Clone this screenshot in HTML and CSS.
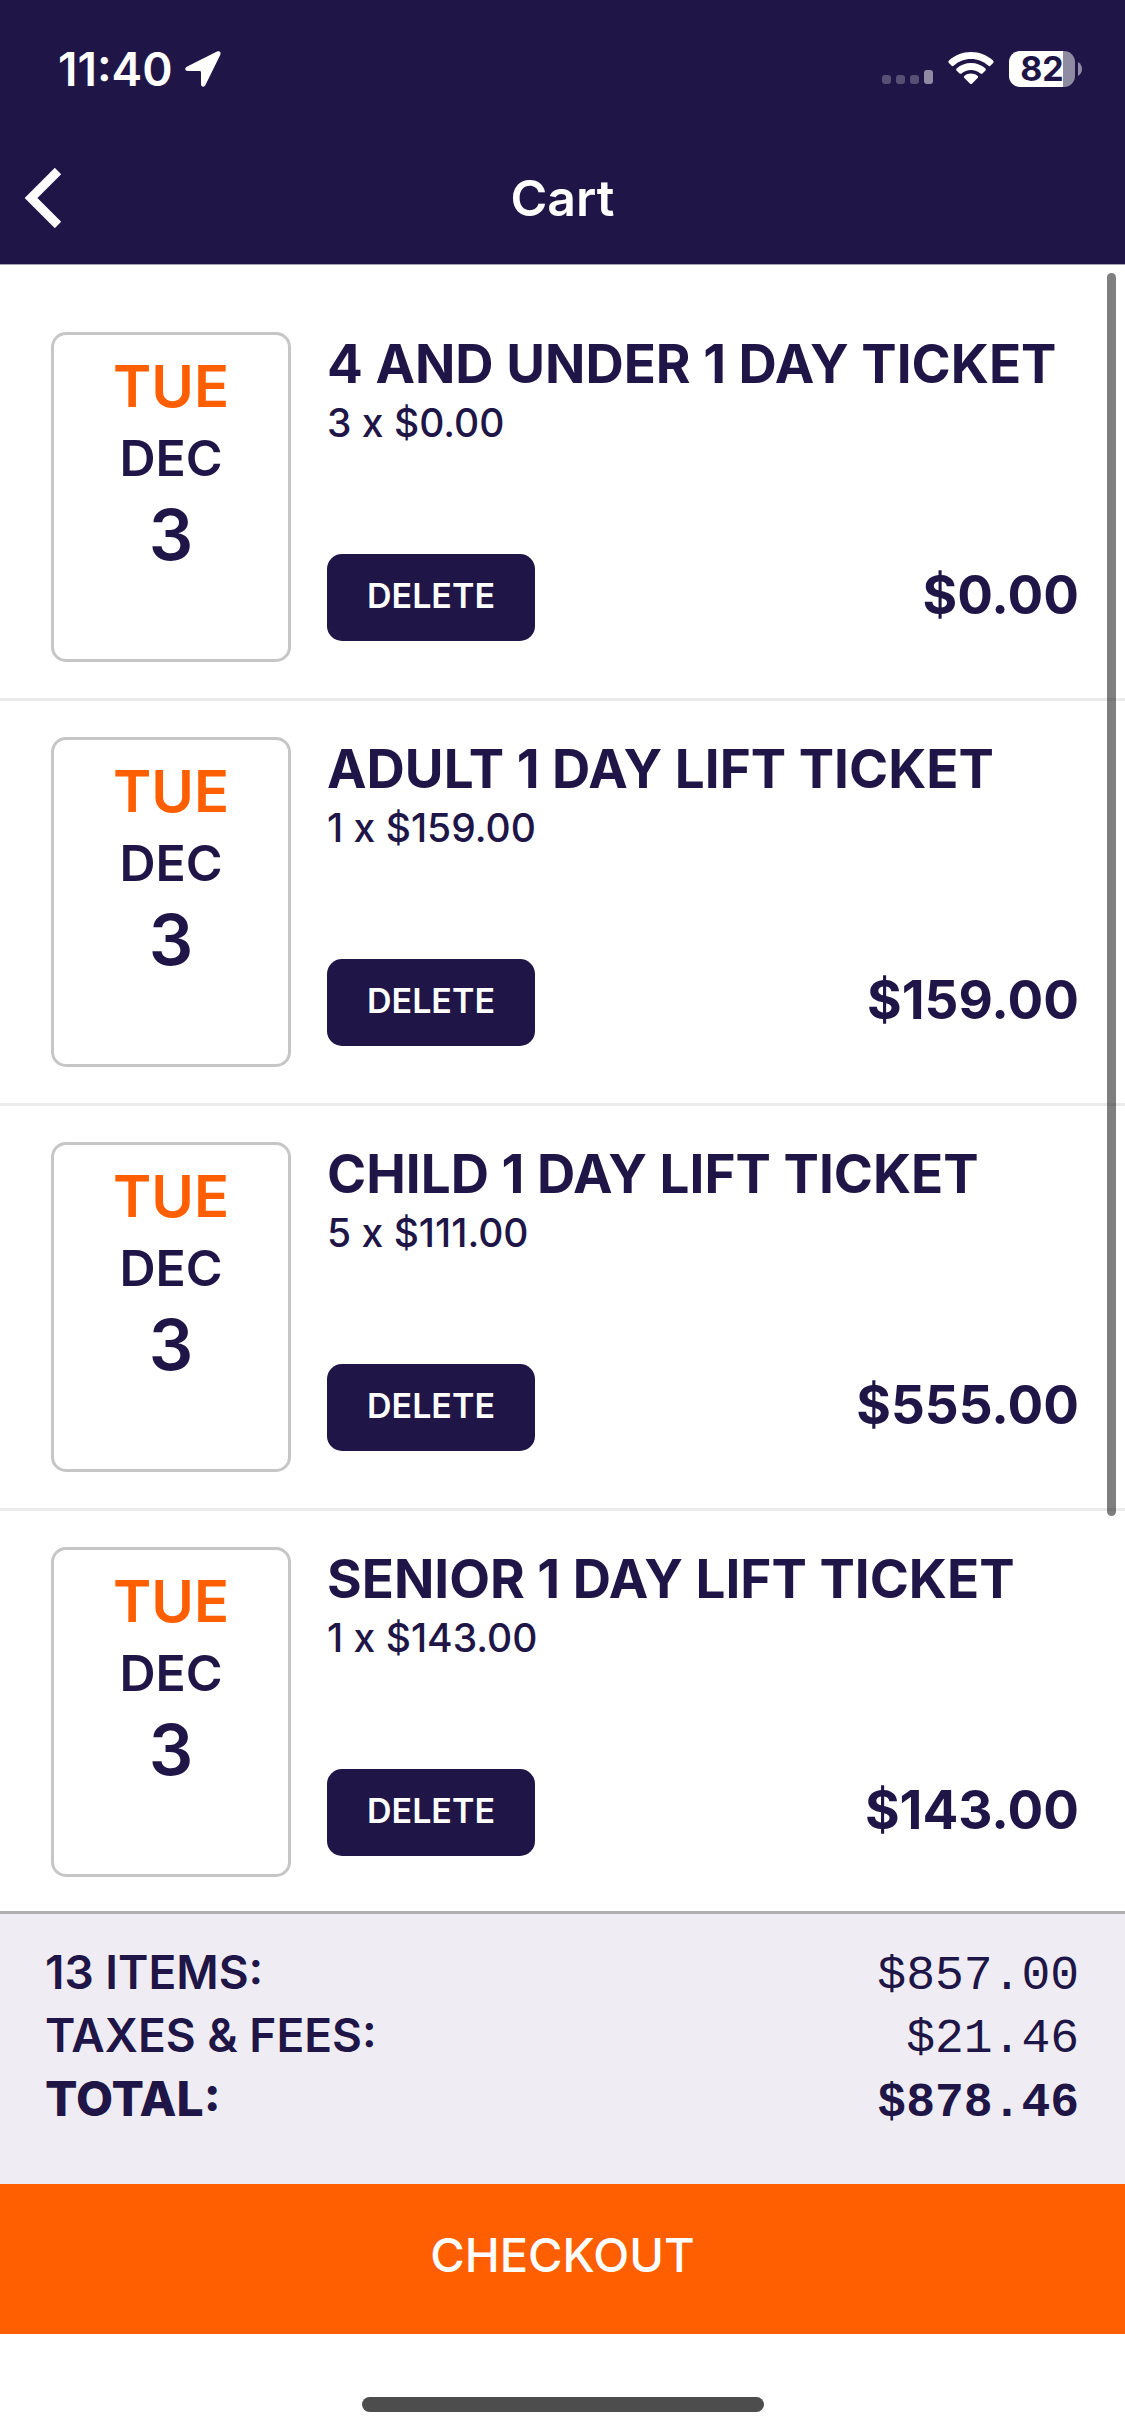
FILE: index.html
```
<!DOCTYPE html>
<html lang="en">
<head>
    <meta charset="UTF-8">
    <meta name="viewport" content="width=device-width, initial-scale=1.0">
    <title>Cart</title>
    <link rel="stylesheet" href="styles.css">
</head>
<body>
    <div class="app">
        <header class="header">
            <div class="status-bar">
                <div class="status-left">
                    <span class="time">11:40</span>
                    <svg class="location" width="36" height="36" viewBox="0 0 36 36" fill="#fff">
                        <path d="M32 .6 2.2 15.4C-.8 17-.2 20 3 20h11.500c1 0 1.500.5 1.500 1.500V33c0 3.200 3.200 3.800 4.600.8L35.200 4C36.400 1.400 34.600-.6 32 .6z"/>
                    </svg>
                </div>
                <div class="status-right">
                    <svg width="51" height="34" viewBox="0 0 51 34" fill="#fff">
                        <rect x="0" y="23" width="9" height="9" rx="3" opacity=".25"/>
                        <rect x="14" y="23" width="9" height="9" rx="3" opacity=".25"/>
                        <rect x="28" y="23" width="9" height="9" rx="3" opacity=".25"/>
                        <rect x="42" y="18" width="9" height="14" rx="3" opacity=".5"/>
                    </svg>
                    <svg width="46" height="34" viewBox="0 0 46 34" fill="#fff">
                        <path d="M23 0C14.500 0 6.800 3.200 1 8.500c-.8.800-.9 1.800-.1 2.600l2.500 2.500c.7.700 1.600.7 2.400 0C10.400 9.500 16.400 7 23 7s12.600 2.500 17.200 6.600c.8.700 1.700.7 2.400 0l2.500-2.500c.8-.8.700-1.800-.1-2.600C39.200 3.200 31.500 0 23 0z"/>
                        <path d="M23 11c-5.400 0-10.400 2-14.200 5.300-.8.700-.8 1.700-.1 2.400l2.600 2.600c.7.700 1.500.7 2.300.1C16.200 19.300 19.400 18 23 18s6.800 1.300 9.400 3.400c.8.600 1.600.6 2.300-.1l2.600-2.600c.7-.7.7-1.700-.1-2.400C33.400 13 28.400 11 23 11z"/>
                        <path d="M23 21.500c-2.400 0-4.700.8-6.500 2.200-.8.600-.8 1.500-.1 2.200l5.400 5.600c.8.800 1.600.8 2.400 0l5.400-5.600c.7-.7.7-1.600-.1-2.200-1.800-1.400-4.100-2.200-6.500-2.200z"/>
                    </svg>
                    <div class="battery">
                        <span class="battery-level">82</span>
                        <svg width="4" height="14" viewBox="0 0 4 14" fill="#8f8ba3">
                            <path d="M0 0c2.500 1.500 4 4 4 7s-1.500 5.500-4 7z"/>
                        </svg>
                    </div>
                </div>
            </div>
            <nav class="nav-bar">
                <button class="back" aria-label="Back">
                    <svg width="38" height="60" viewBox="0 0 38 60" fill="none" stroke="#fff" stroke-width="9">
                        <path d="M34 3 7 30l27 27"/>
                    </svg>
                </button>
                <h1>Cart</h1>
            </nav>
        </header>

        <main class="cart">
            <ul class="items">
                <li class="item">
                    <div class="date">
                        <span class="weekday">TUE</span>
                        <span class="month">DEC</span>
                        <span class="day">3</span>
                    </div>
                    <div class="details">
                        <h2>4 AND UNDER 1 DAY TICKET</h2>
                        <p class="quantity">3 x $0.00</p>
                        <div class="actions">
                            <button class="delete">DELETE</button>
                            <span class="price">$0.00</span>
                        </div>
                    </div>
                </li>
                <li class="item">
                    <div class="date">
                        <span class="weekday">TUE</span>
                        <span class="month">DEC</span>
                        <span class="day">3</span>
                    </div>
                    <div class="details">
                        <h2>ADULT 1 DAY LIFT TICKET</h2>
                        <p class="quantity">1 x $159.00</p>
                        <div class="actions">
                            <button class="delete">DELETE</button>
                            <span class="price">$159.00</span>
                        </div>
                    </div>
                </li>
                <li class="item">
                    <div class="date">
                        <span class="weekday">TUE</span>
                        <span class="month">DEC</span>
                        <span class="day">3</span>
                    </div>
                    <div class="details">
                        <h2>CHILD 1 DAY LIFT TICKET</h2>
                        <p class="quantity">5 x $111.00</p>
                        <div class="actions">
                            <button class="delete">DELETE</button>
                            <span class="price">$555.00</span>
                        </div>
                    </div>
                </li>
                <li class="item">
                    <div class="date">
                        <span class="weekday">TUE</span>
                        <span class="month">DEC</span>
                        <span class="day">3</span>
                    </div>
                    <div class="details">
                        <h2>SENIOR 1 DAY LIFT TICKET</h2>
                        <p class="quantity">1 x $143.00</p>
                        <div class="actions">
                            <button class="delete">DELETE</button>
                            <span class="price">$143.00</span>
                        </div>
                    </div>
                </li>
            </ul>
            <div class="scroll-thumb"></div>
        </main>

        <footer class="footer">
            <dl class="summary">
                <div class="summary-row">
                    <dt>13 ITEMS:</dt>
                    <dd>$857.00</dd>
                </div>
                <div class="summary-row">
                    <dt>TAXES &amp; FEES:</dt>
                    <dd>$21.46</dd>
                </div>
                <div class="summary-row total">
                    <dt>TOTAL:</dt>
                    <dd>$878.46</dd>
                </div>
            </dl>
            <button class="checkout">CHECKOUT</button>
            <div class="home-indicator"></div>
        </footer>
    </div>
</body>
</html>
```
FILE: styles.css
```
* {
    box-sizing: border-box;
}

body {
    margin: 0;
    font-family: Inter, "Liberation Sans", sans-serif;
    background-color: #fff;
    color: #201547;
}

button {
    border: none;
    font-family: inherit;
    cursor: pointer;
}

.app {
    display: flex;
    flex-direction: column;
    height: 100vh;
}

/* Header */
.header {
    background-color: #201547;
    border-bottom: 1px solid #a5a1b5;
    color: #fff;
}

.status-bar {
    display: flex;
    justify-content: space-between;
    align-items: center;
    padding: 39px 43px 33px 58px;
}

.status-left,
.status-right,
.battery {
    display: flex;
    align-items: center;
}

.status-left {
    gap: 12px;
}

.status-right {
    gap: 15px;
}

.time {
    font-size: 46px;
    line-height: 60px;
    font-weight: 600;
}

.battery {
    gap: 3px;
}

.battery-level {
    width: 66px;
    border-radius: 11px;
    background: linear-gradient(to right, #fff 82%, #8f8ba3 82%);
    color: #201547;
    font-size: 34px;
    line-height: 36px;
    font-weight: 700;
    text-align: center;
}

.nav-bar {
    display: grid;
    grid-template-columns: 1fr auto 1fr;
    align-items: center;
    padding: 36px 24px;
}

.back {
    justify-self: start;
    padding: 0;
    background: none;
}

.back svg {
    display: block;
}

h1 {
    margin: 0;
    font-size: 50px;
    line-height: 60px;
    font-weight: 600;
}

/* Cart items */
.cart {
    position: relative;
    flex: 1;
    min-height: 0;
}

.items {
    height: 100%;
    margin: 0;
    padding: 31px 0 0;
    list-style: none;
    overflow-y: auto;
    scrollbar-width: none;
}

.item {
    display: flex;
    gap: 36px;
    padding: 36px 46px 36px 51px;
    border-bottom: 3px solid #ebebeb;
}

.date {
    display: flex;
    flex-direction: column;
    align-items: center;
    flex-shrink: 0;
    width: 240px;
    min-height: 330px;
    padding-top: 15px;
    border: 3px solid #c6c6c6;
    border-radius: 15px;
}

.weekday {
    color: #ff5f00;
    font-size: 58px;
    line-height: 72px;
    font-weight: 600;
}

.month {
    font-size: 50px;
    line-height: 72px;
    font-weight: 600;
}

.day {
    font-size: 70px;
    line-height: 82px;
    font-weight: 600;
}

.details {
    display: flex;
    flex-direction: column;
    flex: 1;
    padding-bottom: 21px;
}

h2 {
    margin: 0;
    font-size: 53px;
    line-height: 64px;
    font-weight: 700;
    white-space: nowrap;
}

.quantity {
    margin: 0;
    font-size: 39px;
    line-height: 54px;
    font-weight: 500;
}

.actions {
    display: flex;
    justify-content: space-between;
    align-items: center;
    margin-top: auto;
}

.delete {
    padding: 0 40px 3px;
    border-radius: 15px;
    background-color: #201547;
    color: #fff;
    font-size: 34px;
    line-height: 84px;
    font-weight: 600;
}

.price {
    padding-bottom: 6px;
    font-size: 53px;
    line-height: 64px;
    font-weight: 700;
}

.scroll-thumb {
    position: absolute;
    top: 8px;
    right: 9px;
    width: 9px;
    height: 1243px;
    border-radius: 5px;
    background-color: rgba(0, 0, 0, 0.5);
}

/* Footer */
.summary {
    margin: 0;
    padding: 27px 46px 54px 45px;
    border-top: 3px solid #b0b0b0;
    background-color: #efedf3;
}

.summary-row {
    display: flex;
    justify-content: space-between;
    align-items: baseline;
    font-size: 46px;
    line-height: 63px;
    font-weight: 600;
}

.summary-row dd {
    margin: 0;
    font-family: "Liberation Mono", "Courier New", monospace;
    font-size: 48px;
    line-height: 48px;
    font-weight: 400;
}

.summary .total dt {
    font-size: 48px;
    font-weight: 800;
}

.summary .total dd {
    font-weight: 700;
}

.checkout {
    display: block;
    width: 100%;
    padding: 0 0 9px;
    background-color: #ff5f00;
    color: #fff;
    font-size: 47px;
    line-height: 141px;
    font-weight: 500;
}

.home-indicator {
    width: 402px;
    height: 15px;
    margin: 63px auto 24px;
    border-radius: 8px;
    background-color: #4d4d4d;
}
```
